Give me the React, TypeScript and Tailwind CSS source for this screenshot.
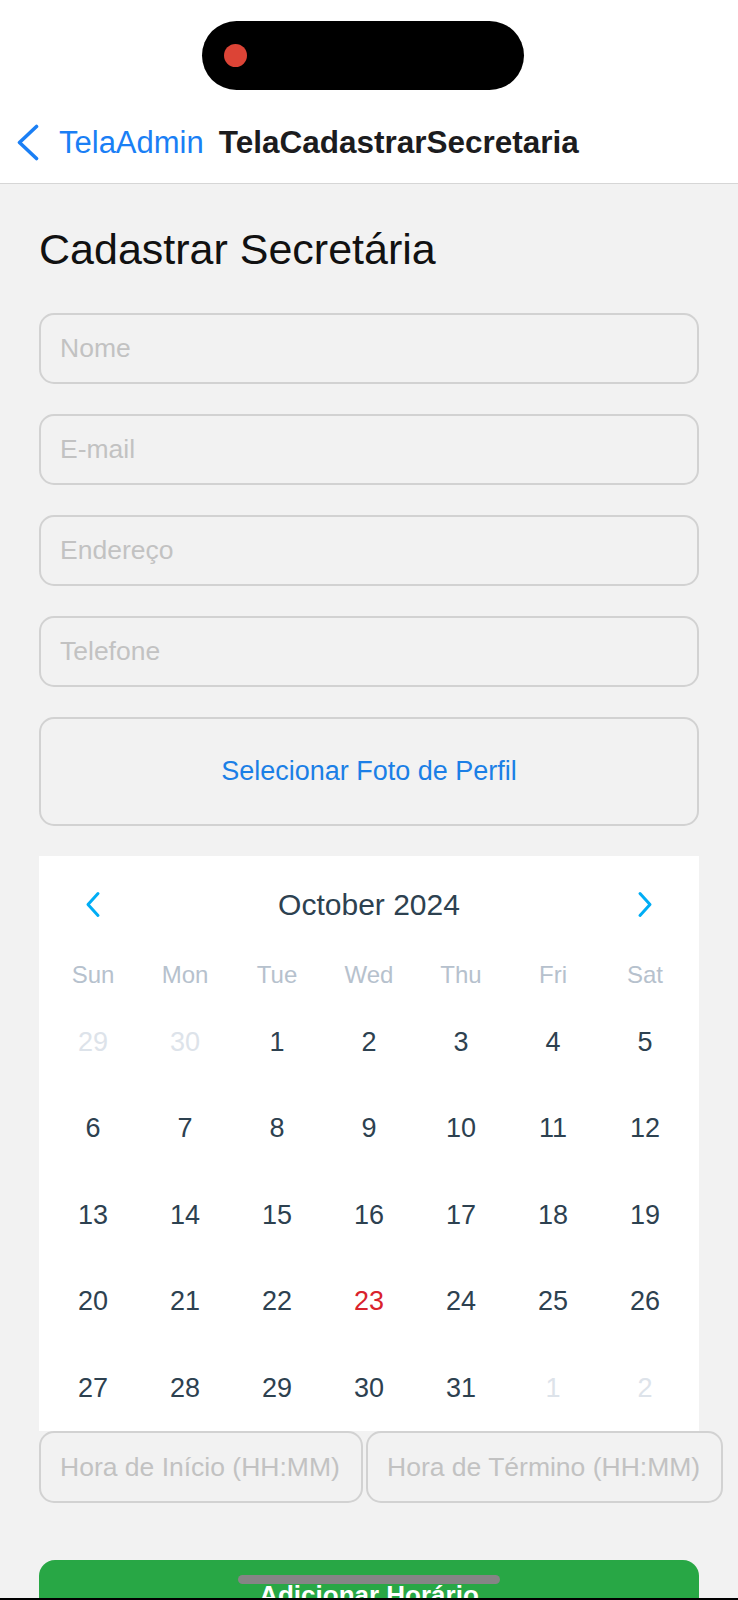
import React from "react";

const weekDays = ["Sun", "Mon", "Tue", "Wed", "Thu", "Fri", "Sat"];

type Day = { n: number; muted?: boolean; today?: boolean };

const rows: Day[][] = [
  [{ n: 29, muted: true }, { n: 30, muted: true }, { n: 1 }, { n: 2 }, { n: 3 }, { n: 4 }, { n: 5 }],
  [{ n: 6 }, { n: 7 }, { n: 8 }, { n: 9 }, { n: 10 }, { n: 11 }, { n: 12 }],
  [{ n: 13 }, { n: 14 }, { n: 15 }, { n: 16 }, { n: 17 }, { n: 18 }, { n: 19 }],
  [{ n: 20 }, { n: 21 }, { n: 22 }, { n: 23, today: true }, { n: 24 }, { n: 25 }, { n: 26 }],
  [{ n: 27 }, { n: 28 }, { n: 29 }, { n: 30 }, { n: 31 }, { n: 1, muted: true }, { n: 2, muted: true }],
];

function Field({ placeholder }: { placeholder: string }) {
  return (
    <input
      readOnly
      placeholder={placeholder}
      className="mb-[30px] block h-[71px] w-full rounded-[15px] border-2 border-[#d2d2d2] bg-transparent px-[19px] text-[26.5px] text-[#222] outline-none placeholder:text-[#c2c2c2]"
    />
  );
}

export default function App() {
  return (
    <div className="relative h-[1600px] w-[738px] overflow-hidden bg-[#f2f2f2] font-['Liberation_Sans',Arial,sans-serif]">
      <header className="flex h-[184px] flex-col border-b border-[#d6d6d6] bg-white">
        <div className="ml-[202px] mt-[21px] flex h-[69px] w-[322px] items-center rounded-full bg-black">
          <div className="ml-[22px] h-[23px] w-[23px] rounded-full bg-[#dc4436]" />
        </div>
        <div className="mt-[27px] flex h-[51px] items-center">
          <svg className="ml-[15px]" width="26" height="37" viewBox="0 0 26 37" fill="none">
            <path d="M21.5 2.5 L4.5 18.5 L21.5 34.5" stroke="#1a7ff5" strokeWidth="3.6" strokeLinecap="round" strokeLinejoin="round" />
          </svg>
          <span className="ml-[18px] text-[31px] leading-none text-[#1a7ff5]">TelaAdmin</span>
          <span className="ml-[15px] text-[31.5px] font-bold leading-none text-[#1c1c1e]">TelaCadastrarSecretaria</span>
        </div>
      </header>

      <main className="px-[39px] pt-[41px]">
        <h1 className="mb-[40px] text-[43px] leading-[48px] text-[#111]">Cadastrar Secretária</h1>

        <Field placeholder="Nome" />
        <Field placeholder="E-mail" />
        <Field placeholder="Endereço" />
        <Field placeholder="Telefone" />

        <button className="mt-[1px] flex h-[109px] w-full items-center justify-center rounded-[15px] border-2 border-[#d2d2d2] text-[27px] text-[#1b7fe6]">
          Selecionar Foto de Perfil
        </button>

        <section className="mt-[30px] bg-white px-[8px]">
          <div className="flex h-[96px] items-center justify-between">
            <div className="flex w-[92px] justify-center">
              <svg width="16" height="27" viewBox="0 0 16 27" fill="none">
                <path d="M13 2.5 L3 13.5 L13 24.5" stroke="#00adf5" strokeWidth="3" strokeLinecap="round" strokeLinejoin="round" />
              </svg>
            </div>
            <span className="text-[30px] text-[#2d4150]">October 2024</span>
            <div className="flex w-[92px] justify-center">
              <svg width="16" height="27" viewBox="0 0 16 27" fill="none">
                <path d="M3 2.5 L13 13.5 L3 24.5" stroke="#00adf5" strokeWidth="3" strokeLinecap="round" strokeLinejoin="round" />
              </svg>
            </div>
          </div>
          <div className="grid h-[46.5px] grid-cols-7 items-center">
            {weekDays.map((d) => (
              <span key={d} className="text-center text-[24px] text-[#b6c1cd]">
                {d}
              </span>
            ))}
          </div>
          {rows.map((row, i) => (
            <div key={i} className="grid h-[86.5px] grid-cols-7 items-center">
              {row.map((d, j) => (
                <span
                  key={j}
                  className={
                    "text-center text-[27px] " +
                    (d.today ? "text-[#d9222c]" : d.muted ? "text-[#dde3ea]" : "text-[#2d4150]")
                  }
                >
                  {d.n}
                </span>
              ))}
            </div>
          ))}
        </section>

        <div className="flex gap-[3px]">
          <input
            readOnly
            placeholder="Hora de Início (HH:MM)"
            className="h-[72px] w-[324px] shrink-0 rounded-[15px] border-2 border-[#d2d2d2] bg-transparent px-[19px] text-[26.5px] outline-none placeholder:text-[#c2c2c2]"
          />
          <input
            readOnly
            placeholder="Hora de Término (HH:MM)"
            className="h-[72px] w-[357px] shrink-0 rounded-[15px] border-2 border-[#d2d2d2] bg-transparent px-[19px] text-[26.5px] outline-none placeholder:text-[#c2c2c2]"
          />
        </div>

        <button className="mt-[57px] flex h-[71px] w-full items-center justify-center rounded-[16px] bg-[#28a745] text-[26px] font-bold text-white">
          Adicionar Horário
        </button>
      </main>

      <div className="absolute left-[238px] top-[1575px] h-[9px] w-[262px] rounded-full bg-[#858585]" />
      <div className="absolute bottom-0 left-0 h-[2px] w-full bg-black" />
    </div>
  );
}
